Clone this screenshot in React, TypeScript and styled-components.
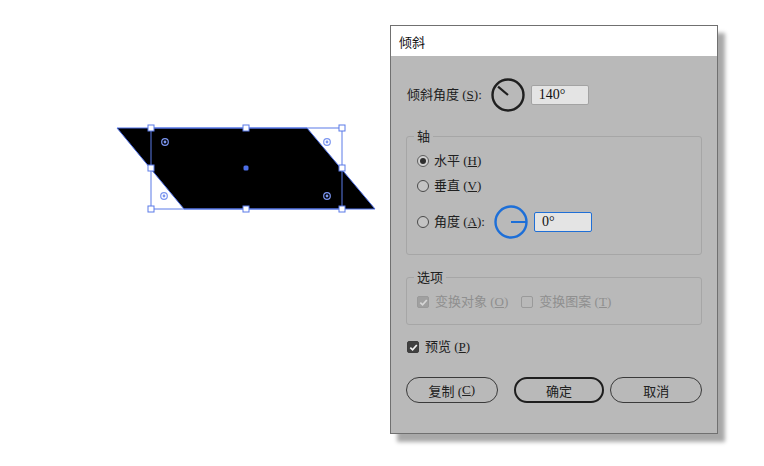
import React from "react";
import styled, { createGlobalStyle } from "styled-components";

const GlobalStyle = createGlobalStyle`
  html, body {
    margin: 0;
    padding: 0;
    background: #ffffff;
  }
  body {
    font-family: "Liberation Serif", "Noto Sans CJK SC", serif;
  }
`;

const Page = styled.div`
  width: 764px;
  height: 466px;
  display: flex;
  align-items: flex-start;
  overflow: hidden;
`;

const Artboard = styled.svg`
  flex: 0 0 390px;
  height: 466px;
  display: block;
`;

const Dialog = styled.div`
  box-sizing: border-box;
  margin-top: 25px;
  width: 328px;
  height: 409px;
  border: 1px solid #707070;
  background: #b9b9b9;
  box-shadow: 7px 8px 4px rgba(0, 0, 0, 0.34);
  display: flex;
  flex-direction: column;
  color: #202020;
  font-size: 13px;
`;

const TitleBar = styled.div`
  height: 30px;
  background: #ffffff;
  display: flex;
  align-items: center;
  padding-left: 8px;
  font-family: "Noto Sans CJK SC", sans-serif;
  font-size: 13px;
  color: #111;
`;

const Body = styled.div`
  padding: 22px 15px 0 16px;
  display: flex;
  flex-direction: column;
`;

const Row = styled.div<{ $h?: number; $mt?: number; $disabled?: boolean }>`
  display: flex;
  align-items: center;
  height: ${(p) => p.$h ?? 20}px;
  margin-top: ${(p) => p.$mt ?? 0}px;
  color: ${(p) => (p.$disabled ? "#8f8f8f" : "#202020")};
  white-space: pre;
`;

const Label = styled.span`
  line-height: 16px;
`;

const Dial = styled.svg`
  display: block;
  margin: 0 6px 0 9px;
`;

const ValueBox = styled.div<{ $active?: boolean }>`
  box-sizing: border-box;
  width: 58px;
  height: 20px;
  border-radius: 2px;
  background: #e4e4e4;
  border: ${(p) => (p.$active ? "1.5px solid #1f6fd6" : "1px solid #a3a3a3")};
  display: flex;
  align-items: center;
  padding-left: 7px;
  font-size: 14px;
  color: #111;
`;

const Group = styled.fieldset<{ $mt: number; $h: number }>`
  box-sizing: border-box;
  margin: ${(p) => p.$mt}px 0 0 -1px;
  width: 296px;
  height: ${(p) => p.$h}px;
  border: 1px solid #a6a6a6;
  border-radius: 3px;
  padding: 0 10px 0 10px;
`;

const Legend = styled.legend`
  padding: 0 3px;
  margin-left: -3px;
  line-height: 16px;
  font-family: "Noto Sans CJK SC", sans-serif;
  font-size: 13px;
  color: #202020;
`;

const Radio = styled.span<{ $on?: boolean }>`
  box-sizing: border-box;
  width: 12px;
  height: 12px;
  border-radius: 50%;
  border: 1.5px solid ${(p) => (p.$on ? "#5e5e5e" : "#4a4a4a")};
  background: ${(p) => (p.$on ? "#d0d0d0" : "#c4c4c4")};
  margin-right: 5px;
  display: flex;
  align-items: center;
  justify-content: center;
  &::after {
    content: "";
    width: 6px;
    height: 6px;
    border-radius: 50%;
    background: ${(p) => (p.$on ? "#2e2e2e" : "transparent")};
  }
`;

const Check = styled.span<{ $disabled?: boolean; $on?: boolean }>`
  box-sizing: border-box;
  width: 12px;
  height: 12px;
  border-radius: 2px;
  margin-right: 6px;
  border: 1px solid ${(p) => (p.$disabled ? "#9a9a9a" : "#3d3d3d")};
  background: ${(p) => (!p.$on ? "transparent" : p.$disabled ? "#a0a0a0" : "#404040")};
  display: flex;
  align-items: center;
  justify-content: center;
`;

const Spacer = styled.span<{ $w: number }>`
  display: inline-block;
  width: ${(p) => p.$w}px;
`;

const ButtonRow = styled.div`
  display: flex;
  margin-top: 20px;
  height: 26px;
  margin-left: -1px;
`;

const PillButton = styled.button<{ $primary?: boolean; $ml: number }>`
  box-sizing: border-box;
  width: ${(p) => (p.$primary ? 91 : 92)}px;
  height: 26px;
  margin-left: ${(p) => p.$ml}px;
  border-radius: 13px;
  border: ${(p) => (p.$primary ? "2px solid #1e1e1e" : "1px solid #3a3a3a")};
  background: #b9b9b9;
  font-family: "Liberation Serif", "Noto Sans CJK SC", serif;
  font-size: 13px;
  color: #202020;
  padding: 0;
  display: flex;
  align-items: center;
  justify-content: center;
  white-space: pre;
`;

const CheckMark: React.FC<{ color: string }> = ({ color }) => (
  <svg width="9" height="9" viewBox="0 0 9 9">
    <path d="M1.3 4.6 L3.6 6.8 L7.8 2" fill="none" stroke={color} strokeWidth="1.7" />
  </svg>
);

const SkewDial: React.FC = () => {
  const a = (140 * Math.PI) / 180;
  const c = 17;
  const r = 15.5;
  return (
    <Dial width="34" height="34" viewBox="0 0 34 34">
      <circle cx={c} cy={c} r={r} fill="none" stroke="#1f1f1f" strokeWidth="2.4" />
      <line
        x1={c}
        y1={c}
        x2={c + Math.cos(a) * 13}
        y2={c - Math.sin(a) * 13}
        stroke="#1f1f1f"
        strokeWidth="2.2"
      />
    </Dial>
  );
};

const AxisDial: React.FC = () => (
  <Dial width="34" height="34" viewBox="0 0 34 34">
    <circle cx="17" cy="17" r="15.5" fill="none" stroke="#1d6fd8" strokeWidth="2.4" />
    <line x1="17" y1="17" x2="33" y2="17" stroke="#1d6fd8" strokeWidth="2" />
  </Dial>
);

const handles: [number, number][] = [
  [151, 128], [246, 128], [342, 128],
  [151, 168], [342, 168],
  [151, 209], [246, 209], [342, 209],
];

const pivots: [number, number][] = [
  [165, 142], [327, 142], [164, 196], [327, 196],
];

const Artwork: React.FC = () => (
  <Artboard viewBox="0 0 390 466">
    <polygon
      points="117,128 307,128 375,209 184,209"
      fill="#000"
      stroke="#4d6ee6"
      strokeWidth="1"
    />
    <rect x="151" y="128" width="191" height="81" fill="none" stroke="#5a7ae8" strokeWidth="1" />
    {pivots.map(([x, y]) => (
      <g key={`${x}-${y}`}>
        <circle cx={x} cy={y} r="3.3" fill="none" stroke="#7b95f0" strokeWidth="1.2" />
        <circle cx={x} cy={y} r="1.4" fill="#7b95f0" />
      </g>
    ))}
    <rect x="243.5" y="165.5" width="5" height="5" rx="1.5" fill="#4d6ee6" />
    {handles.map(([x, y]) => (
      <rect
        key={`${x}-${y}`}
        x={x - 3}
        y={y - 3}
        width="6"
        height="6"
        fill="#fff"
        stroke="#5a7ae8"
        strokeWidth="1"
      />
    ))}
  </Artboard>
);

const App: React.FC = () => (
  <Page>
    <GlobalStyle />
    <Artwork />
    <Dialog>
      <TitleBar>倾斜</TitleBar>
      <Body>
        <Row $h={34}>
          <Label>
            倾斜角度 (<u>S</u>):
          </Label>
          <SkewDial />
          <ValueBox>140°</ValueBox>
        </Row>

        <Group $mt={16} $h={127}>
          <Legend>轴</Legend>
          <Row $mt={7}>
            <Radio $on />
            <Label>
              水平 (<u>H</u>)
            </Label>
          </Row>
          <Row $mt={5}>
            <Radio />
            <Label>
              垂直 (<u>V</u>)
            </Label>
          </Row>
          <Row $h={34} $mt={9}>
            <Radio />
            <Label>
              角度 (<u>A</u>):
            </Label>
            <AxisDial />
            <ValueBox $active>0°</ValueBox>
          </Row>
        </Group>

        <Group $mt={14} $h={56}>
          <Legend>选项</Legend>
          <Row $mt={7} $disabled>
            <Check $disabled $on>
              <CheckMark color="#d6d6d6" />
            </Check>
            <Label>
              变换对象 (<u>O</u>)
            </Label>
            <Spacer $w={13} />
            <Check $disabled />
            <Label>
              变换图案 (<u>T</u>)
            </Label>
          </Row>
        </Group>

        <Row $mt={12}>
          <Check $on>
            <CheckMark color="#f2f2f2" />
          </Check>
          <Label>
            预览 (<u>P</u>)
          </Label>
        </Row>

        <ButtonRow>
          <PillButton $ml={0}>
            复制 (<u>C</u>)
          </PillButton>
          <PillButton $primary $ml={16}>
            确定
          </PillButton>
          <PillButton $ml={6}>取消</PillButton>
        </ButtonRow>
      </Body>
    </Dialog>
  </Page>
);

export default App;
